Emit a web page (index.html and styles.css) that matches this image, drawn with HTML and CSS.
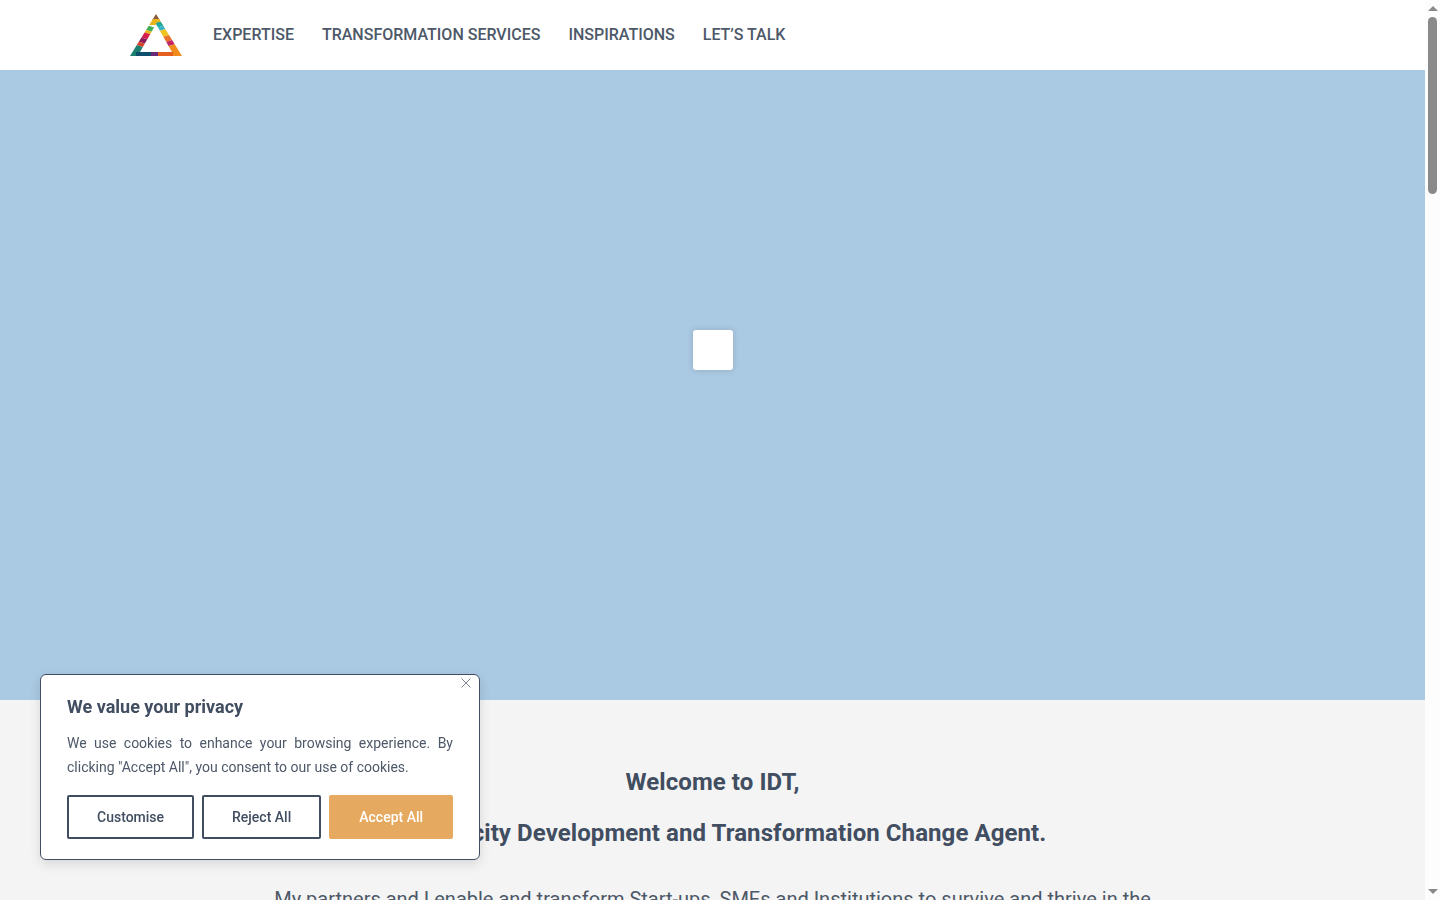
FILE: index.html
```html
<!DOCTYPE html>
<html lang="en">
<head>
    <meta charset="UTF-8">
    <meta name="viewport" content="width=device-width, initial-scale=1.0">
    <title>IDT</title>
    <link rel="stylesheet" href="styles.css">
</head>
<body>
    <div class="shell">
        <div class="page">
            <div class="nav">
                <a class="logo" href="#">
                    <svg width="52" height="42" viewBox="0 0 52 42">
                        <defs>
                            <clipPath id="logo-clip">
                                <path clip-rule="evenodd" d="M26 0L52 42H0Z M26 10L10 38H42Z"/>
                            </clipPath>
                        </defs>
                        <g clip-path="url(#logo-clip)">
                            <rect width="52" height="6" fill="#8c5a3c"/>
                            <rect y="5" width="52" height="6" fill="#e8b51d"/>
                            <polygon points="0,6 26,14 26,19 0,11" fill="#3fae5a"/>
                            <polygon points="0,11 26,19 26,22 0,14" fill="#e8b51d"/>
                            <polygon points="0,14 26,22 26,28 0,20" fill="#d4204f"/>
                            <polygon points="0,20 26,28 26,33 0,25" fill="#8a1f5e"/>
                            <polygon points="0,25 26,33 26,37 0,29" fill="#d9412b"/>
                            <polygon points="0,29 26,37 26,42 0,42" fill="#1d7f6e"/>
                            <polygon points="26,9 52,1 52,6 26,14" fill="#1fa9a0"/>
                            <polygon points="26,14 52,6 52,10 26,18" fill="#37b5c9"/>
                            <polygon points="26,18 52,10 52,17 26,25" fill="#efc420"/>
                            <polygon points="26,25 52,17 52,23 26,31" fill="#e8722c"/>
                            <polygon points="26,31 52,23 52,28 26,36" fill="#c2265f"/>
                            <polygon points="26,36 52,28 52,42 26,42" fill="#ef8c1d"/>
                            <rect x="6" y="38" width="15" height="4" fill="#0f4f6e"/>
                            <rect x="21" y="38" width="7" height="4" fill="#6a2a7a"/>
                            <rect x="28" y="38" width="15" height="4" fill="#e5601f"/>
                        </g>
                    </svg>
                </a>
                <a href="#">EXPERTISE</a>
                <a href="#">TRANSFORMATION SERVICES</a>
                <a href="#">INSPIRATIONS</a>
                <a href="#">LET’S TALK</a>
            </div>
            <div class="hero">
                <div class="play-box"></div>
            </div>
            <div class="welcome">
                <h2>Welcome to IDT,</h2>
                <h2>I'm Capacity Development and Transformation Change Agent.</h2>
                <p>My partners and I enable and transform Start-ups, SMEs and Institutions to survive and thrive in the</p>
            </div>
        </div>
        <div class="scrollbar">
            <span class="arrow-up"></span>
            <div class="track"><div class="thumb"></div></div>
            <span class="arrow-down"></span>
        </div>
    </div>
    <div class="cookie">
        <button class="cookie-close" aria-label="Close">
            <svg width="10" height="10" viewBox="0 0 10 10"><path d="M0.5 0.5L9.5 9.5M9.5 0.5L0.5 9.5"/></svg>
        </button>
        <p class="cookie-title">We value your privacy</p>
        <p class="cookie-text">We use cookies to enhance your browsing experience. By clicking "Accept All", you consent to our use of cookies.</p>
        <div class="cookie-buttons">
            <button class="btn">Customise</button>
            <button class="btn">Reject All</button>
            <button class="btn accept">Accept All</button>
        </div>
    </div>
</body>
</html>
```

FILE: styles.css
```css
:root {
    --dark: #414d60;
    --text: #4d5868;
    --hero: #aac9e2;
    --light: #f4f4f4;
    --accept: #e5a95f;
}
* {
    box-sizing: border-box;
    margin: 0;
    padding: 0;
}
html, body {
    height: 100%;
    overflow: hidden;
}
body {
    font-family: Roboto, "Liberation Sans", sans-serif;
    color: var(--dark);
    background: var(--light);
}
.shell {
    display: flex;
    height: 900px;
}
.page {
    flex: 1;
    overflow: hidden;
}
.nav {
    display: flex;
    align-items: center;
    gap: 28px;
    height: 70px;
    padding-left: 130px;
    padding-bottom: 2px;
    background: #fff;
}
.nav a {
    color: var(--text);
    font-size: 16px;
    font-weight: 500;
    text-decoration: none;
}
.nav .logo {
    display: flex;
    margin-top: 2px;
    margin-right: 3px;
}
.hero {
    display: flex;
    justify-content: center;
    height: 630px;
    padding-top: 260px;
    background: var(--hero);
}
.play-box {
    width: 40px;
    height: 40px;
    background: #fff;
    border-radius: 3px;
    box-shadow: 0 0 6px rgba(0, 0, 0, 0.15);
}
.welcome {
    padding-top: 66px;
    text-align: center;
}
.welcome h2 {
    font-size: 24px;
    font-weight: 700;
    line-height: 32px;
    letter-spacing: 0.08px;
    margin-bottom: 19px;
}
.welcome p {
    margin-top: 35px;
    font-size: 20px;
    line-height: 30px;
    color: var(--text);
}
.scrollbar {
    display: flex;
    flex-direction: column;
    align-items: center;
    width: 15px;
    background: #fdfdfd;
}
.arrow-up, .arrow-down {
    flex: none;
    width: 0;
    height: 0;
    border-left: 5px solid transparent;
    border-right: 5px solid transparent;
}
.arrow-up {
    margin-top: 6px;
    border-bottom: 5px solid #8a8a8a;
}
.arrow-down {
    margin-bottom: 6px;
    border-top: 5px solid #8a8a8a;
}
.track {
    flex: 1;
    width: 100%;
    padding: 6px 3px 0;
}
.thumb {
    height: 177px;
    background: #8a8a8a;
    border-radius: 5px;
}
.cookie {
    position: fixed;
    left: 40px;
    bottom: 40px;
    width: 440px;
    height: 186px;
    padding: 21px 26px 0;
    background: #fff;
    border: 1px solid var(--dark);
    border-radius: 6px;
    box-shadow: 0 4px 12px rgba(0, 0, 0, 0.12);
}
.cookie-close {
    position: absolute;
    top: 3px;
    right: 8px;
    display: flex;
    background: none;
    border: none;
}
.cookie-close path {
    stroke: #7d8794;
    stroke-width: 1;
    fill: none;
}
.cookie-title {
    font-size: 18px;
    font-weight: 700;
    line-height: 22px;
    margin-bottom: 13px;
}
.cookie-text {
    font-size: 14px;
    line-height: 24px;
    text-align: justify;
    margin-bottom: 16px;
    color: var(--text);
}
.cookie-buttons {
    display: flex;
    gap: 8px;
}
.btn {
    flex: 1 1 auto;
    height: 44px;
    padding: 0 28px;
    background: #fff;
    color: var(--dark);
    border: 2px solid var(--dark);
    border-radius: 2px;
    font-family: inherit;
    font-size: 14px;
    font-weight: 500;
    white-space: nowrap;
}
.btn.accept {
    background: var(--accept);
    border-color: var(--accept);
    color: #fff;
}
```
